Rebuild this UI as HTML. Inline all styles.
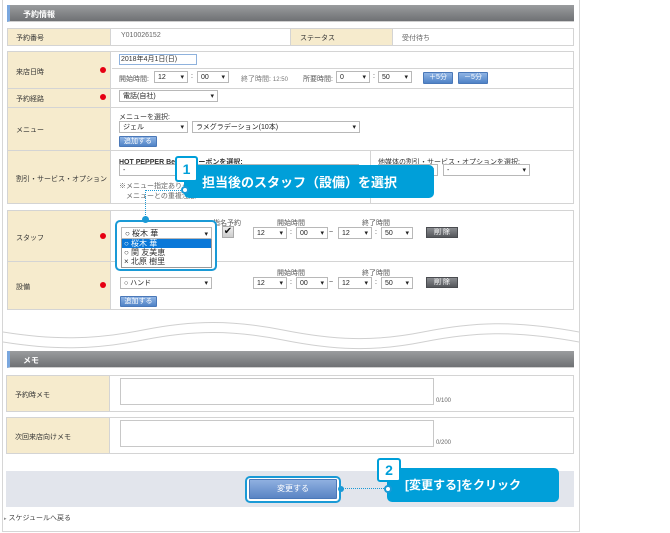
<!DOCTYPE html>
<html><head><meta charset="utf-8">
<style>
*{margin:0;padding:0;box-sizing:border-box}
body{width:670px;height:533px;background:#fff;position:relative;overflow:hidden;font-family:"Liberation Sans","Noto Sans CJK JP",sans-serif;font-size:7px;color:#333}
.a{position:absolute}
.outer{left:2px;top:0;width:578px;height:532px;border:1px solid #d6d6d6;border-top:none}
.hdr{height:17px;background:linear-gradient(#9a9c9e,#6f7174);border-left:3px solid #7aa7de;color:#fff;font-size:8px;font-weight:bold;padding:4px 0 0 13px;border-bottom:1px solid #cfcfcf}
.box{border:1px solid #d4d4d4;background:#fff}
.lb{background:#f6ebcd;border-right:1px solid #d4d4d4}
.ln{background:#d4d4d4;height:1px}
.sel{border:1px solid #b8b8b8;background:#fff;height:12px;font-size:7px;padding:2px 0 0 3px;color:#222;line-height:7px}
.sel:after{content:"▾";position:absolute;right:3px;top:2px;font-size:7px}
.btn{background:linear-gradient(#8fb4e4,#4f83c6);border:1px solid #4a78b8;color:#fff;font-size:7px;text-align:center;line-height:9px;border-radius:1px;white-space:nowrap}
.dbtn{background:linear-gradient(#8a8c90,#55585c);border:1px solid #4a4c50;color:#fff;font-size:7px;text-align:center;line-height:9px}
.dot{width:6px;height:6px;border-radius:3px;background:#e60012}
.t{white-space:nowrap}
</style></head><body>
<div class="a outer"></div>
<div class="a hdr" style="left:7px;top:5px;width:567px">予約情報</div>

<div class="a box" style="left:7px;top:28px;width:567px;height:18px"></div>
<div class="a lb" style="left:8px;top:29px;width:103px;height:16px"></div>
<div class="a lb" style="left:290px;top:29px;width:103px;height:16px;border-left:1px solid #d4d4d4"></div>
<div class="a t" style="left:16px;top:33px">予約番号</div>
<div class="a t" style="left:121px;top:32px;color:#666">Y010026152</div>
<div class="a t" style="left:300px;top:33px">ステータス</div>
<div class="a t" style="left:402px;top:33px;color:#666">受付待ち</div>

<div class="a box" style="left:7px;top:51px;width:567px;height:153px"></div>
<div class="a lb" style="left:8px;top:52px;width:103px;height:151px"></div>
<div class="a ln" style="left:8px;top:88px;width:565px"></div>
<div class="a ln" style="left:8px;top:107px;width:565px"></div>
<div class="a ln" style="left:8px;top:150px;width:565px"></div>
<div class="a ln" style="left:112px;top:68px;width:461px"></div>
<div class="a" style="left:370px;top:151px;width:1px;height:52px;background:#d4d4d4"></div>
<div class="a t" style="left:16px;top:67px">来店日時</div><div class="a dot" style="left:100px;top:67px"></div>
<div class="a t" style="left:16px;top:94px">予約経路</div><div class="a dot" style="left:100px;top:94px"></div>
<div class="a t" style="left:16px;top:125px">メニュー</div>
<div class="a t" style="left:16px;top:174px">割引・サービス・オプション</div>

<div class="a" style="left:119px;top:54px;width:78px;height:11px;border:1px solid #8fb2dd;padding:1px 0 0 1px;font-size:7px;line-height:8px">2018年4月1日(日)</div>
<div class="a t" style="left:119px;top:74px;color:#555">開始時間:</div>
<div class="a sel" style="left:154px;top:71px;width:34px">12</div>
<div class="a t" style="left:191px;top:73px">:</div>
<div class="a sel" style="left:197px;top:71px;width:32px">00</div>
<div class="a t" style="left:241px;top:74px;color:#777">終了時間: <span style="font-size:6px">12:50</span></div>
<div class="a t" style="left:303px;top:74px;color:#555">所要時間:</div>
<div class="a sel" style="left:336px;top:71px;width:34px">0</div>
<div class="a t" style="left:373px;top:73px">:</div>
<div class="a sel" style="left:378px;top:71px;width:34px">50</div>
<div class="a btn" style="left:423px;top:72px;width:30px;height:12px;line-height:10px">＋5分</div>
<div class="a btn" style="left:458px;top:72px;width:30px;height:12px;line-height:10px">－5分</div>

<div class="a sel" style="left:119px;top:90px;width:99px">電話(自社)</div>
<div class="a t" style="left:119px;top:112px">メニューを選択:</div>
<div class="a sel" style="left:119px;top:121px;width:69px">ジェル</div>
<div class="a sel" style="left:192px;top:121px;width:168px">ラメグラデーション(10本)</div>
<div class="a btn" style="left:119px;top:136px;width:38px;height:11px">追加する</div>

<div class="a t" style="left:119px;top:157px;font-weight:bold">HOT PEPPER Beauty クーポンを選択:</div>
<div class="a sel" style="left:119px;top:164px;width:240px">-</div>
<div class="a t" style="left:119px;top:181px;color:#666">※メニュー指定ありクーポン</div>
<div class="a t" style="left:126px;top:191px;color:#666">メニューとの重複注意</div>
<div class="a t" style="left:378px;top:157px">他媒体の割引・サービス・オプションを選択:</div>
<div class="a sel" style="left:378px;top:164px;width:60px"></div>
<div class="a sel" style="left:443px;top:164px;width:87px">-</div>

<div class="a box" style="left:7px;top:210px;width:567px;height:100px"></div>
<div class="a lb" style="left:8px;top:211px;width:103px;height:98px"></div>
<div class="a ln" style="left:8px;top:261px;width:565px"></div>
<div class="a t" style="left:16px;top:233px">スタッフ</div><div class="a dot" style="left:100px;top:233px"></div>
<div class="a t" style="left:16px;top:282px">設備</div><div class="a dot" style="left:100px;top:282px"></div>

<div class="a t" style="left:213px;top:218px;color:#555">指名予約</div>
<div class="a" style="left:222px;top:226px;width:12px;height:12px;background:linear-gradient(#eee,#ccc);border:1px solid #aaa;font-size:10px;line-height:10px;text-align:center;color:#111">✔</div>
<div class="a t" style="left:277px;top:218px;color:#555">開始時間</div>
<div class="a t" style="left:362px;top:218px;color:#555">終了時間</div>
<div class="a sel" style="left:253px;top:227px;width:34px">12</div>
<div class="a t" style="left:290px;top:229px">:</div>
<div class="a sel" style="left:296px;top:227px;width:32px">00</div>
<div class="a t" style="left:329px;top:229px">~</div>
<div class="a sel" style="left:338px;top:227px;width:34px">12</div>
<div class="a t" style="left:375px;top:229px">:</div>
<div class="a sel" style="left:381px;top:227px;width:32px">50</div>
<div class="a dbtn" style="left:426px;top:227px;width:32px;height:11px">削 除</div>

<div class="a t" style="left:277px;top:268px;color:#555">開始時間</div>
<div class="a t" style="left:362px;top:268px;color:#555">終了時間</div>
<div class="a sel" style="left:120px;top:277px;width:92px">○ ハンド</div>
<div class="a sel" style="left:253px;top:277px;width:34px">12</div>
<div class="a t" style="left:290px;top:279px">:</div>
<div class="a sel" style="left:296px;top:277px;width:32px">00</div>
<div class="a t" style="left:329px;top:279px">~</div>
<div class="a sel" style="left:338px;top:277px;width:34px">12</div>
<div class="a t" style="left:375px;top:279px">:</div>
<div class="a sel" style="left:381px;top:277px;width:32px">50</div>
<div class="a dbtn" style="left:426px;top:277px;width:32px;height:11px">削 除</div>
<div class="a btn" style="left:120px;top:296px;width:37px;height:11px">追加する</div>

<div class="a" style="left:115px;top:220px;width:102px;height:51px;border:2px solid #1a9ad6;border-radius:5px;background:#fff"></div>
<div class="a sel" style="left:121px;top:227px;width:91px;height:12px;font-size:8px;padding-top:1px;line-height:9px">○ 桜木 華</div>
<div class="a" style="left:121px;top:239px;width:91px;height:29px;border:1px solid #999;border-top:none;background:#fff;font-size:8px;line-height:9px">
<div style="background:#0a78d8;color:#fff;padding-left:2px">○ 桜木 華</div>
<div style="padding-left:2px">○ 関 友美恵</div>
<div style="padding-left:2px">× 北原 樹里</div></div>
<div class="a" style="left:142px;top:216px;width:7px;height:7px;border-radius:4px;background:#1a9ad6"></div>

<svg class="a" style="left:3px;top:320px" width="576" height="30"><g fill="none" stroke="#d0d0d0" stroke-width="1">
<path d="M0 12 C50 20,90 20,140 10 S230 0,280 10 S370 22,420 12 S510 0,576 12"/>
<path d="M0 22 C50 30,90 30,140 20 S230 10,280 20 S370 32,420 22 S510 10,576 22"/></g></svg>

<div class="a hdr" style="left:7px;top:351px;width:567px">メモ</div>

<div class="a box" style="left:6px;top:375px;width:568px;height:37px"></div>
<div class="a lb" style="left:7px;top:376px;width:103px;height:35px"></div>
<div class="a t" style="left:15px;top:390px">予約時メモ</div>
<div class="a" style="left:120px;top:378px;width:314px;height:27px;border:1px solid #c8c8c8"></div>
<div class="a t" style="left:436px;top:398px;font-size:6px;color:#666">0/100</div>

<div class="a box" style="left:6px;top:417px;width:568px;height:37px"></div>
<div class="a lb" style="left:7px;top:418px;width:103px;height:35px"></div>
<div class="a t" style="left:15px;top:432px">次回来店向けメモ</div>
<div class="a" style="left:120px;top:420px;width:314px;height:27px;border:1px solid #c8c8c8"></div>
<div class="a t" style="left:436px;top:440px;font-size:6px;color:#666">0/200</div>

<div class="a" style="left:6px;top:471px;width:568px;height:36px;background:#e2e5ec"></div>
<div class="a" style="left:245px;top:476px;width:96px;height:27px;border:2px solid #1a9ad6;border-radius:5px;background:#fff"></div>
<div class="a btn" style="left:249px;top:479px;width:88px;height:20px;line-height:18px;font-size:8px;background:linear-gradient(#8fb0e0,#5a84c4)">変更する</div>
<div class="a" style="left:340px;top:488px;width:48px;border-top:1px dotted #1a9ad6"></div>
<div class="a" style="left:338px;top:486px;width:6px;height:6px;border-radius:3px;background:#1a9ad6"></div>
<div class="a t" style="left:387px;top:468px;width:172px;height:34px;background:#009fd9;border-radius:5px;color:#fff;font-size:12px;font-weight:bold;padding:8px 0 0 18px">[変更する]をクリック</div>
<div class="a" style="left:384px;top:485px;width:8px;height:8px;border-radius:4px;background:#fff;border:2px solid #1a9ad6"></div>
<div class="a" style="left:377px;top:458px;width:24px;height:24px;background:#fff;border:2px solid #009fd9;border-radius:3px;color:#009fd9;font-size:14px;font-weight:bold;text-align:center;line-height:20px">2</div>

<div class="a t" style="left:4px;top:513px;font-size:7px;color:#444"><span style="font-size:5px;color:#888">▸</span> スケジュールへ戻る</div>

<div class="a" style="left:145px;top:190px;height:29px;border-left:1px dotted #1a9ad6"></div>
<div class="a" style="left:145px;top:190px;width:40px;border-top:1px dotted #1a9ad6"></div>
<div class="a t" style="left:184px;top:165px;width:250px;height:33px;background:#009fd9;border-radius:5px;color:#fff;font-size:13px;font-weight:bold;padding:7px 0 0 18px">担当後のスタッフ（設備）を選択</div>
<div class="a" style="left:181px;top:186px;width:8px;height:8px;border-radius:4px;background:#fff;border:2px solid #1a9ad6"></div>
<div class="a" style="left:175px;top:156px;width:23px;height:26px;background:#fff;border:2px solid #009fd9;border-radius:3px;color:#009fd9;font-size:14px;font-weight:bold;text-align:center;line-height:22px">1</div>
</body></html>
